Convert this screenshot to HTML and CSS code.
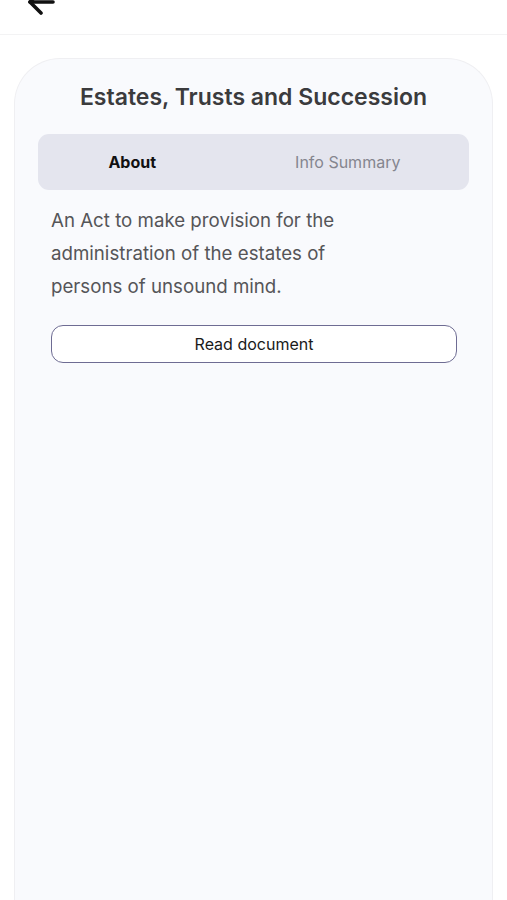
FILE: index.html
```html
<!DOCTYPE html>
<html>
<head>
<meta charset="utf-8">
<link rel="stylesheet" href="styles.css">
</head>
<body>
<header class="topbar">
  <svg class="back" width="30" height="30" viewBox="0 0 30 30" fill="none" stroke="#111" stroke-width="3.6" stroke-linecap="round" stroke-linejoin="round">
    <path d="M27 14H4"/>
    <path d="M15 3L4 14L15 25"/>
  </svg>
</header>
<main class="card">
  <h1 class="title">Estates, Trusts and Succession</h1>
  <div class="tabs">
    <div class="tab active">About</div>
    <div class="tab">Info Summary</div>
  </div>
  <p class="desc">An Act to make provision for the<br>administration of the estates of<br>persons of unsound mind.</p>
  <button class="read">Read document</button>
</main>
</body>
</html>
```
FILE: styles.css
```css
* { box-sizing: border-box; }
html, body { margin: 0; padding: 0; background: #ffffff; }
body {
  font-family: Inter, "Noto Sans", sans-serif;
  width: 507px;
  height: 900px;
  overflow: hidden;
}
.topbar {
  height: 35px;
  border-bottom: 1px solid #f3f3f4;
  padding-left: 26px;
  overflow: hidden;
}
.back {
  display: block;
  margin-top: -12px;
}
.card {
  margin: 23px 14px 0 14px;
  height: 842px;
  background: #f9fafd;
  border: 1px solid #efeff2;
  border-bottom: none;
  border-radius: 46px 46px 0 0;
  padding: 23px 23px 0 23px;
}
.title {
  margin: 0;
  text-align: center;
  font-size: 23px;
  font-weight: 600;
  color: #3b3b3d;
  line-height: 30px;
}
.tabs {
  margin-top: 22px;
  height: 56px;
  background: #e4e5ee;
  border-radius: 11px;
  display: grid;
  grid-template-columns: 1fr 1fr;
  align-items: center;
}
.tab {
  text-align: center;
  font-size: 16px;
  color: #85858f;
  padding-right: 27px;
}
.tab.active {
  font-weight: 700;
  color: #111;
}
.desc {
  margin: 14px 0 0 13px;
  font-size: 18.7px;
  line-height: 33px;
  color: #555558;
}
.read {
  display: block;
  margin: 22px 12px 0 13px;
  width: calc(100% - 25px);
  height: 38px;
  border: 1.5px solid #6e6c93;
  border-radius: 12px;
  background: #ffffff;
  font-family: Inter, "Noto Sans", sans-serif;
  font-size: 16px;
  color: #1a1a1a;
}
```
